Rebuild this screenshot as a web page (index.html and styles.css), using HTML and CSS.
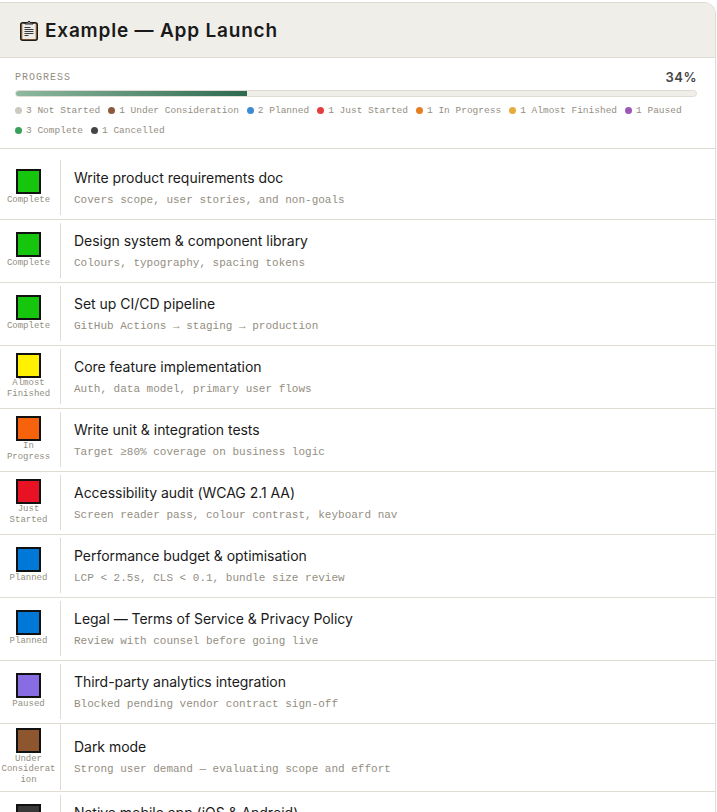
FILE: index.html
```html
<!DOCTYPE html>
<html lang="en">
<head>
<meta charset="utf-8">
<title>Example — App Launch</title>
<link rel="stylesheet" href="styles.css">
</head>
<body>
<main class="card">
  <header class="head">
    <svg class="clip" width="18" height="21" viewBox="0 0 18 21" aria-hidden="true">
      <rect x="0.75" y="2.75" width="16.5" height="17.5" rx="2" fill="#c98d4b" stroke="#1d1d1d" stroke-width="1.5"/>
      <rect x="2.5" y="4" width="13" height="15" fill="#ececec"/>
      <path d="M5 4V2.5h2.4L9 1l1.6 1.5H13V4z" fill="#8b8f94" stroke="#1d1d1d" stroke-width="1"/>
      <path d="M4.5 7.5h6M4.5 9.5h9M4.5 11.5h9M4.5 13.5h9M4.5 15.5h4" stroke="#3a3a3a" stroke-width="1"/>
    </svg>
    <h1 class="title">Example — App Launch</h1>
  </header>
  <section class="progress">
    <div class="progress-top">
      <span class="progress-label">PROGRESS</span>
      <span class="progress-pct">34%</span>
    </div>
    <div class="track"><div class="fill" style="width:34%"></div></div>
    <ul class="legend">
      <li><i class="dot d-not"></i>3 Not Started</li>
      <li><i class="dot d-under"></i>1 Under Consideration</li>
      <li><i class="dot d-planned"></i>2 Planned</li>
      <li><i class="dot d-just"></i>1 Just Started</li>
      <li><i class="dot d-inprog"></i>1 In Progress</li>
      <li><i class="dot d-almost"></i>1 Almost Finished</li>
      <li><i class="dot d-paused"></i>1 Paused</li>
      <li><i class="dot d-complete"></i>3 Complete</li>
      <li><i class="dot d-cancel"></i>1 Cancelled</li>
    </ul>
  </section>
  <ul class="rows">
    <li class="row"><div class="status"><span class="sq s-complete"></span><span class="st">Complete</span></div><div class="body"><div class="name">Write product requirements doc</div><div class="desc">Covers scope, user stories, and non-goals</div></div></li>
    <li class="row"><div class="status"><span class="sq s-complete"></span><span class="st">Complete</span></div><div class="body"><div class="name">Design system &amp; component library</div><div class="desc">Colours, typography, spacing tokens</div></div></li>
    <li class="row"><div class="status"><span class="sq s-complete"></span><span class="st">Complete</span></div><div class="body"><div class="name">Set up CI/CD pipeline</div><div class="desc">GitHub Actions → staging → production</div></div></li>
    <li class="row"><div class="status"><span class="sq s-almost"></span><span class="st">Almost Finished</span></div><div class="body"><div class="name">Core feature implementation</div><div class="desc">Auth, data model, primary user flows</div></div></li>
    <li class="row"><div class="status"><span class="sq s-inprog"></span><span class="st">In Progress</span></div><div class="body"><div class="name">Write unit &amp; integration tests</div><div class="desc">Target ≥80% coverage on business logic</div></div></li>
    <li class="row"><div class="status"><span class="sq s-just"></span><span class="st">Just Started</span></div><div class="body"><div class="name">Accessibility audit (WCAG 2.1 AA)</div><div class="desc">Screen reader pass, colour contrast, keyboard nav</div></div></li>
    <li class="row"><div class="status"><span class="sq s-planned"></span><span class="st">Planned</span></div><div class="body"><div class="name">Performance budget &amp; optimisation</div><div class="desc">LCP &lt; 2.5s, CLS &lt; 0.1, bundle size review</div></div></li>
    <li class="row"><div class="status"><span class="sq s-planned"></span><span class="st">Planned</span></div><div class="body"><div class="name">Legal — Terms of Service &amp; Privacy Policy</div><div class="desc">Review with counsel before going live</div></div></li>
    <li class="row"><div class="status"><span class="sq s-paused"></span><span class="st">Paused</span></div><div class="body"><div class="name">Third-party analytics integration</div><div class="desc">Blocked pending vendor contract sign-off</div></div></li>
    <li class="row"><div class="status"><span class="sq s-under"></span><span class="st">Under Consideration</span></div><div class="body"><div class="name">Dark mode</div><div class="desc">Strong user demand — evaluating scope and effort</div></div></li>
    <li class="row"><div class="status"><span class="sq s-cancel"></span><span class="st">Cancelled</span></div><div class="body"><div class="name">Native mobile app (iOS &amp; Android)</div><div class="desc"></div></div></li>
  </ul>
</main>
</body>
</html>
```

FILE: styles.css
```css
* { box-sizing: border-box; }
html, body { margin: 0; height: 812px; overflow: hidden; background: #fff; }
body { padding: 2px 0 0; font-family: "Inter", "Liberation Sans", sans-serif; color: #1a1a1a; }
.card { width: 716px; border: 1px solid #e0dcd3; border-left: 0; border-radius: 0 12px 0 0; overflow: hidden; }
.head { display: flex; align-items: center; gap: 7px; height: 55px; padding: 0 20px; background: #f0eee9; border-bottom: 1px solid #e0dcd3; }
.clip { flex: none; }
.title { margin: 0; font-family: "Inter", sans-serif; font-size: 19px; font-weight: 600; letter-spacing: 0.8px; color: #1a1a1a; }
.progress { padding: 11px 18px 8px 15px; border-bottom: 1px solid #e0dcd3; }
.progress-top { display: flex; justify-content: space-between; align-items: center; height: 16px; }
.progress-label { font-family: "Liberation Mono", monospace; font-size: 10px; letter-spacing: 1px; color: #938e82; }
.progress-pct { font-family: "Inter", sans-serif; font-size: 13px; font-weight: 600; letter-spacing: 0.5px; color: #444; }
.track { height: 7px; margin-top: 5px; background: #f0eee9; border: 1px solid #e0dcd3; border-radius: 4px; overflow: hidden; }
.fill { height: 100%; background: linear-gradient(90deg, #8fb8a0, #2d6a4f); }
.legend { display: flex; flex-wrap: wrap; gap: 0 8px; margin: 3px 0 0; padding: 0; list-style: none; }
.legend li { display: flex; align-items: center; gap: 4px; height: 20px; font-family: "Liberation Mono", monospace; font-size: 9.5px; color: #938e82; }
.dot { width: 7px; height: 7px; border-radius: 50%; }
.d-not { background: #ccc9c2; }
.d-under { background: #8b5a3c; }
.d-planned { background: #3d8bd4; }
.d-just { background: #e53e3e; }
.d-inprog { background: #e67e22; }
.d-almost { background: #e6ac3a; }
.d-paused { background: #9b59b6; }
.d-complete { background: #38a05a; }
.d-cancel { background: #444; }
.rows { margin: 0; padding: 8px 0 0; list-style: none; }
.row { display: flex; align-items: center; min-height: 63px; padding-bottom: 1px; border-bottom: 1px solid #e0dcd3; }
.status { flex: none; align-self: center; width: 61px; min-height: 55px; padding: 4px 3px 4px 0; display: flex; flex-direction: column; align-items: center; justify-content: center; gap: 0.5px; border-right: 1px solid #e0dcd3; }
.sq { flex: none; width: 25px; height: 25px; border: 2px solid #111; }
.s-complete { background: #16c60c; }
.s-almost { background: #fff100; }
.s-inprog { background: #f7630c; }
.s-just { background: #e81224; }
.s-planned { background: #0078d7; }
.s-paused { background: #886ce4; }
.s-under { background: #8e562e; }
.s-cancel { background: #383838; }
.st { width: 55px; font-family: "Liberation Mono", monospace; font-size: 9px; line-height: 10.8px; text-align: center; color: #938e82; overflow-wrap: anywhere; }
.body { flex: 1; min-width: 0; padding: 1px 13px 0; display: flex; flex-direction: column; justify-content: center; gap: 6px; }
.name { font-size: 14px; line-height: 18px; letter-spacing: -0.03px; color: #1a1a1a; }
.desc { min-height: 14px; font-family: "Liberation Mono", monospace; font-size: 11px; line-height: 14px; color: #938e82; }
```
